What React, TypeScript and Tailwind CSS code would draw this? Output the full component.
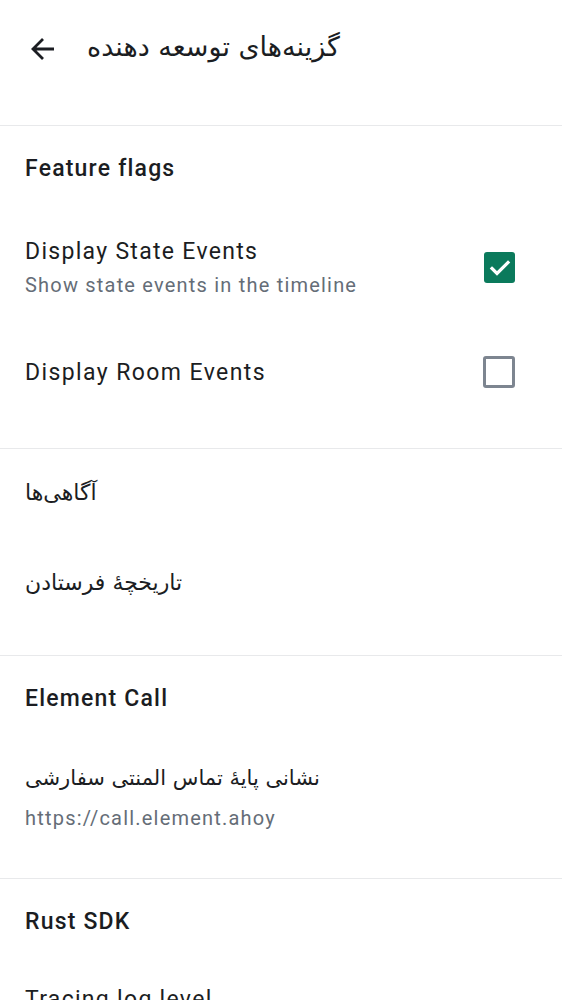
import { ReactNode } from "react";

const font = { fontFamily: "Roboto, 'DejaVu Sans', sans-serif" };

function Fa({ children }: { children: ReactNode }) {
  return <span dir="rtl" style={{ fontFamily: "'DejaVu Sans', sans-serif" }}>{children}</span>;
}

function Checkbox({ checked }: { checked: boolean }) {
  if (checked) {
    return (
      <div className="w-[31px] h-[31px] rounded-[3px] bg-[#0b7a5c] flex items-center justify-center">
        <svg width="24" height="24" viewBox="0 0 24 24" fill="none">
          <path d="M4 12.5l5 5L20 6.5" stroke="white" strokeWidth="3.2" strokeLinecap="square" />
        </svg>
      </div>
    );
  }
  return <div className="w-[32px] h-[32px] rounded-[3px] border-[3px] border-[#7d8590]" />;
}

function SectionHeader({ title }: { title: string }) {
  return (
    <div className="h-[84px] flex items-center px-[25px] pt-[3px] text-[23px] tracking-[1.2px] font-medium text-[#1b1d22]">
      {title}
    </div>
  );
}

export default function App() {
  return (
    <div className="w-[562px] h-[1000px] overflow-hidden bg-white text-[#1b1d22]" style={font}>
      {/* Top bar */}
      <div className="h-[125px] flex items-start pt-[26px] px-[31px] gap-[32px]">
        <svg width="24" height="24" viewBox="0 0 24 24" className="mt-[11px]" fill="none">
          <path d="M23 12H3M12 2L2 12l10 10" stroke="#1b1d22" strokeWidth="2.8" />
        </svg>
        <div className="text-[27px] leading-[42px]">
          <Fa>گزینه‌های توسعه دهنده</Fa>
        </div>
      </div>

      {/* Feature flags */}
      <div className="border-t border-[#e8e9eb] pb-[24px]">
        <SectionHeader title="Feature flags" />
        <div className="h-[110px] flex items-center justify-between px-[25px] pt-[5px]">
          <div>
            <div className="text-[23px] tracking-[1.3px] leading-[32px]">Display State Events</div>
            <div className="text-[20px] tracking-[1.2px] leading-[30px] mt-[2px] text-[#656d77]">
              Show state events in the timeline
            </div>
          </div>
          <div className="mr-[22px]">
            <Checkbox checked />
          </div>
        </div>
        <div className="h-[104px] flex items-center justify-between px-[25px] pt-[3px]">
          <div className="text-[23px] tracking-[1.4px]">Display Room Events</div>
          <div className="mr-[22px] -mt-[3px]">
            <Checkbox checked={false} />
          </div>
        </div>
      </div>

      {/* Notifications / push history */}
      <div className="border-t border-[#e8e9eb] pb-[26px]">
        <div className="h-[90px] flex items-center px-[25px] pb-[4px] text-[22px]">
          <Fa>آگاهی‌ها</Fa>
        </div>
        <div className="h-[90px] flex items-center px-[25px] pb-[4px] text-[22px]">
          <Fa>تاریخچهٔ فرستادن</Fa>
        </div>
      </div>

      {/* Element Call */}
      <div className="border-t border-[#e8e9eb] pb-[24px]">
        <SectionHeader title="Element Call" />
        <div className="h-[114px] flex flex-col justify-center px-[25px]">
          <div className="text-[21px] leading-[36px]">
            <Fa>نشانی پایهٔ تماس المنتی سفارشی</Fa>
          </div>
          <div className="text-[20px] tracking-[1.2px] leading-[32px] mt-[6px] text-[#656d77]">
            https://call.element.ahoy
          </div>
        </div>
      </div>

      {/* Rust SDK */}
      <div className="border-t border-[#e8e9eb]">
        <SectionHeader title="Rust SDK" />
        <div className="h-[74px] flex items-center px-[25px] text-[23px] tracking-[1.3px]">Tracing log level</div>
      </div>
    </div>
  );
}
